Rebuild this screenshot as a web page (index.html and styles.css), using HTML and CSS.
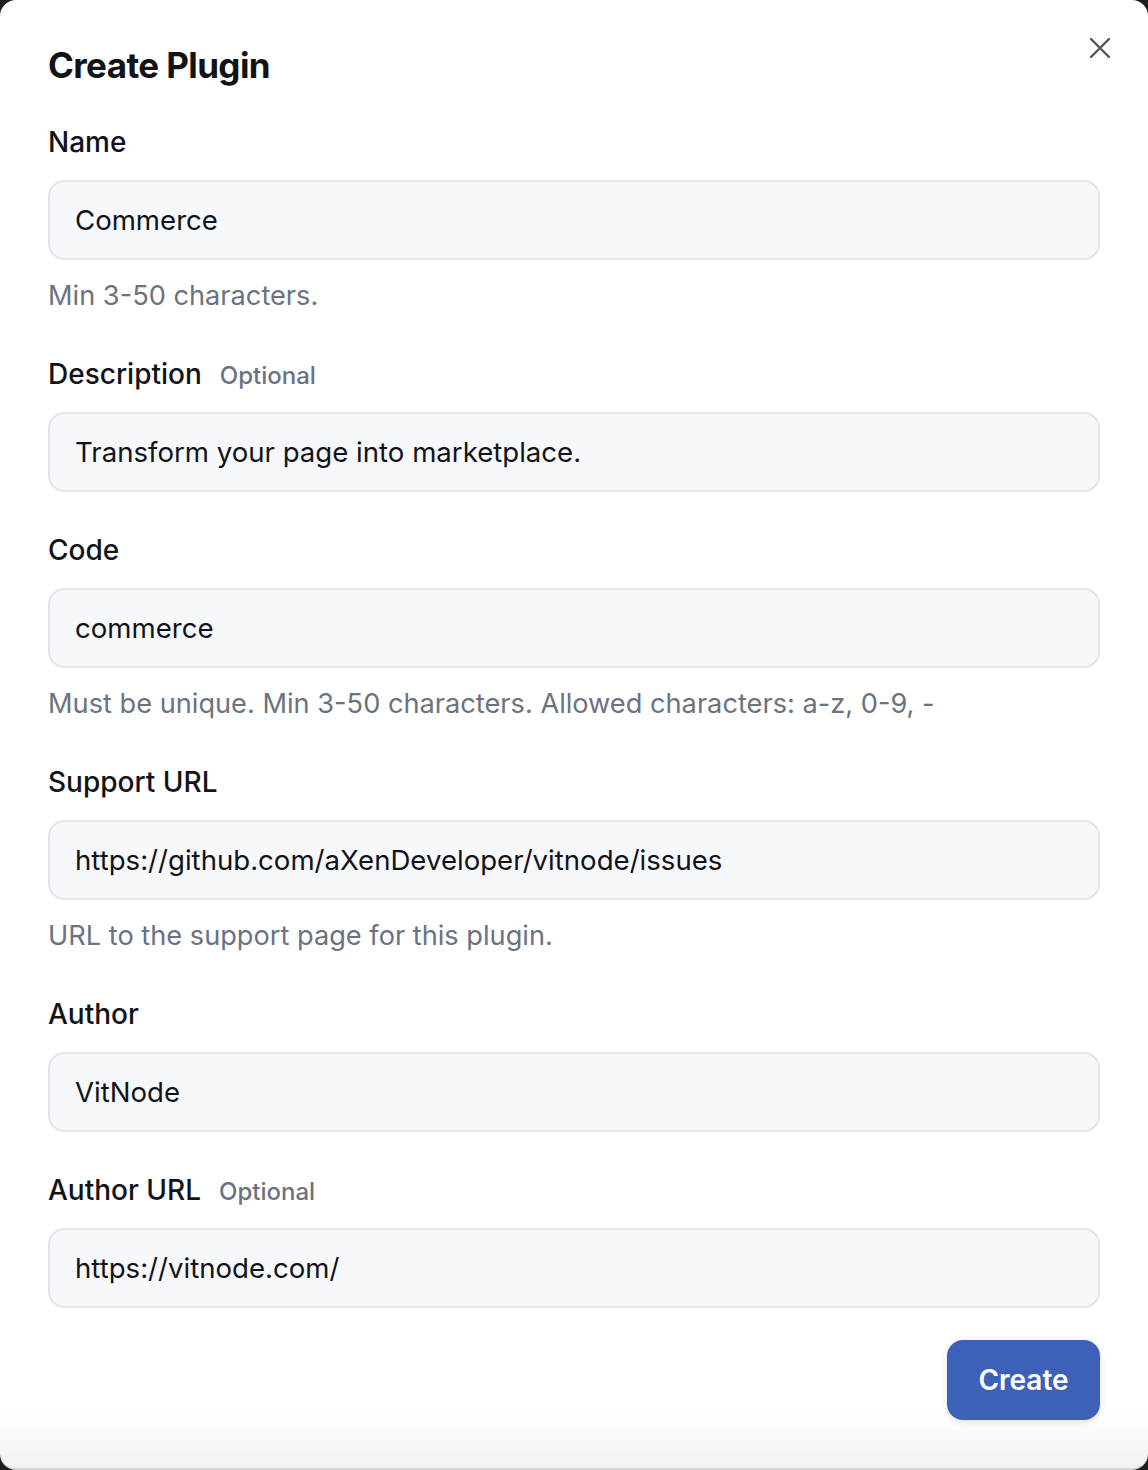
FILE: index.html
```html
<!DOCTYPE html>
<html lang="en">
<head>
<meta charset="utf-8">
<title>Create Plugin</title>
<link rel="stylesheet" href="styles.css">
</head>
<body>
<div class="dialog">
  <button class="close" aria-label="Close">
    <svg width="24" height="24" viewBox="0 0 24 24" fill="none" stroke="#555" stroke-width="2.4" stroke-linecap="round"><path d="M3 3L21 21M21 3L3 21"/></svg>
  </button>
  <h1 class="title">Create Plugin</h1>
  <form class="form">
    <div class="field">
      <label class="label">Name</label>
      <div class="input">Commerce</div>
      <p class="help">Min 3-50 characters.</p>
    </div>
    <div class="field">
      <label class="label">Description <span class="optional">Optional</span></label>
      <div class="input">Transform your page into marketplace.</div>
    </div>
    <div class="field">
      <label class="label">Code</label>
      <div class="input">commerce</div>
      <p class="help">Must be unique. Min 3-50 characters. Allowed characters: a-z, 0-9, -</p>
    </div>
    <div class="field">
      <label class="label">Support URL</label>
      <div class="input">https://github.com/aXenDeveloper/vitnode/issues</div>
      <p class="help">URL to the support page for this plugin.</p>
    </div>
    <div class="field">
      <label class="label">Author</label>
      <div class="input">VitNode</div>
    </div>
    <div class="field">
      <label class="label">Author URL <span class="optional">Optional</span></label>
      <div class="input">https://vitnode.com/</div>
    </div>
    <div class="actions">
      <button type="button" class="btn">Create</button>
    </div>
  </form>
</div>
</body>
</html>
```

FILE: styles.css
```css
* { box-sizing: border-box; }
html, body { margin: 0; padding: 0; }
body {
  background: #1e1e1e;
  font-family: Inter, "Noto Sans", sans-serif;
  color: #111318;
  width: 1148px;
  height: 1470px;
  overflow: hidden;
}
.dialog {
  position: relative;
  height: 1470px;
  border-radius: 16px;
  border-bottom: 2px solid #d4d6da;
  background: linear-gradient(to bottom, #ffffff 0, #ffffff 1410px, #f2f2f2 1468px);
  padding: 43px 48px 0 48px;
}
.close {
  position: absolute;
  top: 36px;
  right: 36px;
  width: 24px;
  height: 24px;
  padding: 0;
  border: 0;
  background: transparent;
  display: flex;
}
.title {
  margin: 0;
  font-size: 35px;
  line-height: 44px;
  font-weight: 700;
  letter-spacing: -0.6px;
  color: #111318;
}
.form {
  margin-top: 37px;
  display: flex;
  flex-direction: column;
  gap: 40px;
}
.field {
  display: flex;
  flex-direction: column;
  gap: 16px;
}
.label {
  display: flex;
  align-items: baseline;
  gap: 18px;
  height: 40px;
  font-size: 28px;
  line-height: 36px;
  font-weight: 500;
  color: #111318;
}
.optional {
  font-size: 24px;
  line-height: 1;
  font-weight: 500;
  color: #6b7280;
}
.input {
  height: 80px;
  border: 2px solid #e2e4ea;
  border-radius: 16px;
  background: #f7f8fc;
  padding: 0 25px;
  display: flex;
  align-items: center;
  font-size: 27.6px;
  color: #111318;
}
.help {
  margin: 0;
  font-size: 27.2px;
  line-height: 40px;
  color: #6b7280;
}
.actions {
  display: flex;
  justify-content: flex-end;
  margin-top: -8px;
}
.btn {
  width: 153px;
  height: 80px;
  border: 0;
  border-radius: 16px;
  background: #3d61b8;
  color: #fff;
  font-family: Inter, "Noto Sans", sans-serif;
  font-size: 28px;
  font-weight: 600;
  box-shadow: 0 2px 6px rgba(0,0,0,0.12);
}
```
